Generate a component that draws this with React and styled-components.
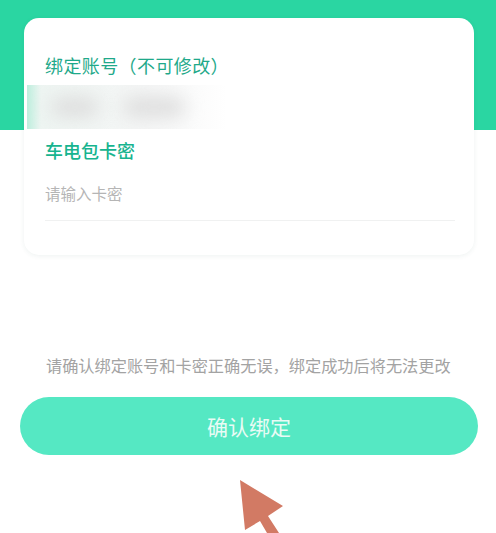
import React from 'react';
import styled, { createGlobalStyle } from 'styled-components';

const cjk = `"Noto Sans CJK SC", "Liberation Sans", sans-serif`;

function App() {
  return (
    <>
      <GlobalStyle />
      <Page>
        <Card>
          <AccountLabel>绑定账号（不可修改）</AccountLabel>
          <BlurredAccount>
            <BlurBlob width={48} />
            <BlurBlob width={62} />
          </BlurredAccount>
          <SecretLabel>车电包卡密</SecretLabel>
          <SecretInput placeholder="请输入卡密" />
        </Card>
        <Notice>请确认绑定账号和卡密正确无误，绑定成功后将无法更改</Notice>
        <ConfirmButton>确认绑定</ConfirmButton>
        <Pointer viewBox="0 0 60 53" aria-hidden="true">
          <path d="M2 0 L45 26 L30 36 L41 53 L29 53 L22 41 L7 50 Z" fill="#d27a64" />
        </Pointer>
      </Page>
    </>
  );
}

const GlobalStyle = createGlobalStyle`
  html, body {
    margin: 0;
    padding: 0;
    background: #ffffff;
  }
`;

const Page = styled.div`
  position: relative;
  width: 496px;
  height: 533px;
  box-sizing: border-box;
  padding: 18px 18px 0 20px;
  overflow: hidden;
  display: flex;
  flex-direction: column;
  font-family: ${cjk};
  background: linear-gradient(to bottom, #2ad6a2 0, #2ad6a2 130px, #ffffff 130px);
`;

const Card = styled.div`
  width: 450px;
  height: 237px;
  margin-left: 4px;
  box-sizing: border-box;
  padding: 35px 19px 0 21px;
  display: flex;
  flex-direction: column;
  align-items: flex-start;
  background: #ffffff;
  border-radius: 15px;
  box-shadow: 0 1px 5px rgba(40, 90, 80, 0.08);
`;

const AccountLabel = styled.div`
  font-size: 18px;
  line-height: 24px;
  letter-spacing: 0.4px;
  color: #1fa98a;
  white-space: nowrap;
`;

const BlurredAccount = styled.div`
  width: 200px;
  height: 44px;
  margin: 8px 0 0 -18px;
  padding-left: 24px;
  box-sizing: border-box;
  display: flex;
  align-items: center;
  gap: 24px;
  overflow: hidden;
  background: linear-gradient(to right, #bdeedd 0, #eef5f2 14px, #f5f6f6 60%, #ffffff 100%);
`;

const BlurBlob = styled.div`
  width: ${props => props.width}px;
  height: 20px;
  border-radius: 10px;
  background: #dedede;
  filter: blur(9px);
`;

const SecretLabel = styled.div`
  margin-top: 9px;
  font-size: 18px;
  font-weight: 500;
  line-height: 24px;
  color: #17b48f;
  white-space: nowrap;
`;

const SecretInput = styled.input`
  width: 100%;
  height: 51px;
  margin-top: 8px;
  padding: 0 0 4px;
  box-sizing: border-box;
  border: none;
  border-bottom: 1px solid #f0f1f1;
  outline: none;
  background: transparent;
  font-family: ${cjk};
  font-size: 15.5px;

  &::placeholder {
    color: #b5b5b5;
    opacity: 1;
  }
`;

const Notice = styled.div`
  margin: 100px 0 0 26px;
  font-size: 16.2px;
  line-height: 20px;
  color: #a3a3a3;
  white-space: nowrap;
`;

const ConfirmButton = styled.button`
  width: 458px;
  height: 58px;
  margin-top: 22px;
  padding: 0;
  border: none;
  border-radius: 29px;
  background: #55e8c3;
  color: #e9fbf5;
  font-family: ${cjk};
  font-size: 21px;
`;

const Pointer = styled.svg`
  position: absolute;
  left: 238px;
  top: 480px;
  width: 60px;
  height: 53px;
`;

export default App;
